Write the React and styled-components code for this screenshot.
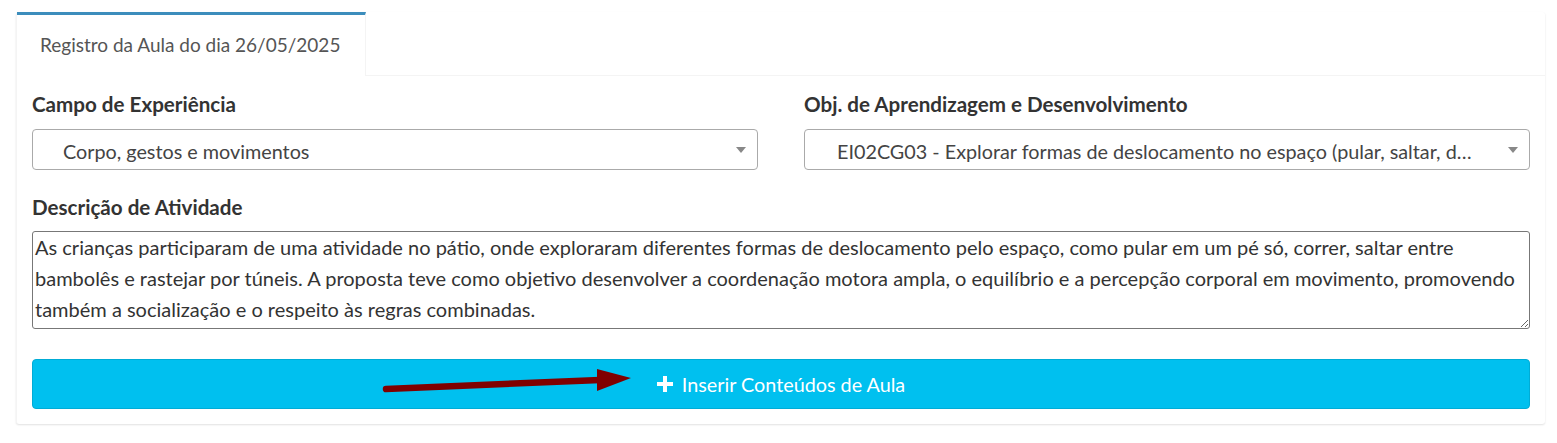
import React from "react";
import styled, { createGlobalStyle } from "styled-components";

const GlobalStyle = createGlobalStyle`
  body {
    margin: 0;
    background: #fff;
    font-family: Lato, "Open Sans", sans-serif;
  }
  * { box-sizing: border-box; }
`;

const Page = styled.div`
  padding: 12px 12px 18px 16px;
`;

const Card = styled.div`
  background: #fff;
  border-radius: 3px;
  box-shadow: 0 1px 2px rgba(0, 0, 0, 0.12);
  border-left: 1px solid #f4f4f4;
`;

const TabBar = styled.div`
  display: flex;
  border-bottom: 1px solid #f4f4f4;
`;

const Tab = styled.div`
  width: 349px;
  height: 64px;
  border-top: 3px solid #3c8dbc;
  border-right: 1px solid #f4f4f4;
  margin-bottom: -1px;
  background: #fff;
  display: flex;
  align-items: center;
  padding-left: 23px;
  padding-bottom: 2px;
  font-size: 19px;
  color: #555;
`;

const Body = styled.div`
  padding: 16px 15px 15px 15px;
  display: flex;
  flex-direction: column;
`;

const Row = styled.div`
  display: grid;
  grid-template-columns: 1fr 1fr;
  column-gap: 46px;
`;

const Field = styled.div`
  display: flex;
  flex-direction: column;
  min-width: 0;
`;

const Label = styled.label`
  font-weight: 700;
  font-size: 20.6px;
  line-height: 24px;
  color: #333;
  margin-bottom: 13px;
`;

const Select = styled.div`
  position: relative;
  height: 41px;
  border: 1px solid #aaa;
  border-radius: 4px;
  display: flex;
  align-items: center;
  padding: 3px 50px 0 ${(p) => p.$indent}px;
  font-size: 19.8px;
  color: #444;
  white-space: nowrap;
  overflow: hidden;

  &::after {
    content: "";
    position: absolute;
    right: 11px;
    top: 17px;
    border-left: 5px solid transparent;
    border-right: 5px solid transparent;
    border-top: 6px solid #888;
  }
`;

const SelectText = styled.span`
  overflow: hidden;
  text-overflow: ellipsis;
`;

const DescField = styled(Field)`
  margin-top: 25px;
`;

const TextArea = styled.textarea`
  width: 100%;
  height: 98px;
  border: 1px solid #777;
  border-radius: 3px;
  padding: 0 2px;
  font-family: Lato, "Open Sans", sans-serif;
  font-size: 20px;
  line-height: 31px;
  color: #333;
  white-space: pre;
  overflow: hidden;
  resize: vertical;
  margin-top: -1px;
`;

const ButtonWrap = styled.div`
  position: relative;
  margin-top: 30px;
`;

const Button = styled.button`
  width: 100%;
  height: 50px;
  background: #00c0ef;
  border: 1px solid #00acd6;
  border-radius: 4px;
  color: #fff;
  font-family: Lato, "Open Sans", sans-serif;
  font-size: 19.8px;
  display: flex;
  align-items: center;
  justify-content: center;
  gap: 9px;
  padding-left: 6px;
`;

const Arrow = styled.svg`
  position: absolute;
  left: 334px;
  top: 8px;
  pointer-events: none;
`;

const description =
  "As crianças participaram de uma atividade no pátio, onde exploraram diferentes formas de deslocamento pelo espaço, como pular em um pé só, correr, saltar entre\n" +
  "bambolês e rastejar por túneis. A proposta teve como objetivo desenvolver a coordenação motora ampla, o equilíbrio e a percepção corporal em movimento, promovendo\n" +
  "também a socialização e o respeito às regras combinadas.";

export default function App() {
  return (
    <>
      <GlobalStyle />
      <Page>
        <Card>
          <TabBar>
            <Tab>Registro da Aula do dia 26/05/2025</Tab>
          </TabBar>
          <Body>
            <Row>
              <Field>
                <Label>Campo de Experiência</Label>
                <Select $indent={30}>
                  <SelectText>Corpo, gestos e movimentos</SelectText>
                </Select>
              </Field>
              <Field>
                <Label>Obj. de Aprendizagem e Desenvolvimento</Label>
                <Select $indent={32}>
                  <SelectText>
                    EI02CG03 - Explorar formas de deslocamento no espaço (pular, saltar, dançar), combinando movimentos e seguindo orientações
                  </SelectText>
                </Select>
              </Field>
            </Row>
            <DescField>
              <Label>Descrição de Atividade</Label>
              <TextArea defaultValue={description} />
            </DescField>
            <ButtonWrap>
              <Button>
                <svg width="16" height="16" viewBox="0 0 16 16">
                  <path d="M6 0h4v6h6v4h-6v6H6v-6H0V6h6z" fill="#fff" />
                </svg>
                Inserir Conteúdos de Aula
              </Button>
              <Arrow width="270" height="30" viewBox="0 0 270 30">
                <line x1="20" y1="22" x2="234" y2="13" stroke="#800000" strokeWidth="6.5" strokeLinecap="round" />
                <polygon points="231,2 265,11 231,24" fill="#800000" />
              </Arrow>
            </ButtonWrap>
          </Body>
        </Card>
      </Page>
    </>
  );
}
